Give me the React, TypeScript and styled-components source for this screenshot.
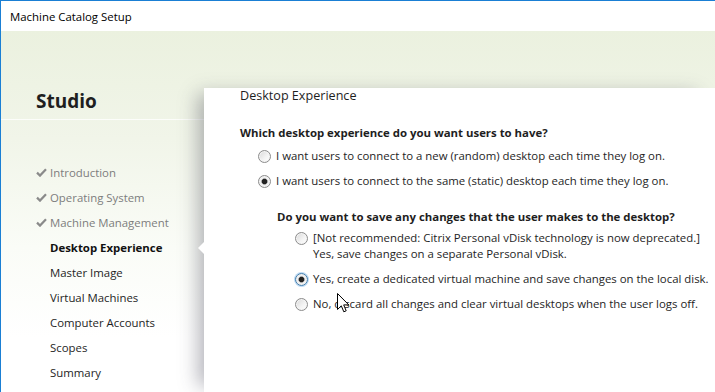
import React from 'react';
import styled, { createGlobalStyle } from 'styled-components';

const GlobalStyle = createGlobalStyle`
  html, body {
    margin: 0;
    padding: 0;
    background: #ffffff;
  }
  body {
    font-family: "Open Sans", "Noto Sans", "Liberation Sans", sans-serif;
    color: #1e1e1e;
  }
`;

const steps = [
  { label: 'Introduction', state: 'done' },
  { label: 'Operating System', state: 'done' },
  { label: 'Machine Management', state: 'done' },
  { label: 'Desktop Experience', state: 'active' },
  { label: 'Master Image', state: 'todo' },
  { label: 'Virtual Machines', state: 'todo' },
  { label: 'Computer Accounts', state: 'todo' },
  { label: 'Scopes', state: 'todo' },
  { label: 'Summary', state: 'todo' },
] as const;

type StepState = 'done' | 'active' | 'todo';

const Check = () => (
  <svg width="11" height="9" viewBox="0 0 11 9">
    <path d="M1 4.6 L4 7.6 L10 1.2" fill="none" stroke="#8a8a8a" strokeWidth="2.2" />
  </svg>
);

const Cursor = () => (
  <svg width="13" height="20" viewBox="0 0 13 20">
    <path
      d="M0.5 0.5 L0.5 16.5 L4.3 12.8 L6.8 18.8 L9.2 17.8 L6.7 11.9 L11.8 11.9 Z"
      fill="#ffffff"
      stroke="#000000"
      strokeWidth="1"
    />
  </svg>
);

const App = () => {
  return (
    <>
      <GlobalStyle />
      <Window>
        <TitleBar>Machine Catalog Setup</TitleBar>
        <Body>
          <Sidebar>
            <Brand>Studio</Brand>
            <BrandRule />
            <StepList>
              {steps.map((s) => (
                <Step key={s.label} $state={s.state}>
                  <CheckSlot>{s.state === 'done' && <Check />}</CheckSlot>
                  {s.label}
                </Step>
              ))}
            </StepList>
          </Sidebar>
          <Main>
            <Panel>
              <PageTitle>Desktop Experience</PageTitle>
              <Question>Which desktop experience do you want users to have?</Question>
              <Options $top={7}>
                <Option>
                  <Radio />
                  <span>I want users to connect to a new (random) desktop each time they log on.</span>
                </Option>
                <Option>
                  <Radio $checked />
                  <span>I want users to connect to the same (static) desktop each time they log on.</span>
                </Option>
              </Options>
              <SubGroup>
                <Question>Do you want to save any changes that the user makes to the desktop?</Question>
                <Options $top={5}>
                  <Option>
                    <Radio />
                    <span>
                      [Not recommended: Citrix Personal vDisk technology is now deprecated.]
                      <br />
                      Yes, save changes on a separate Personal vDisk.
                    </span>
                  </Option>
                  <Option>
                    <Radio $checked $focused />
                    <span>Yes, create a dedicated virtual machine and save changes on the local disk.</span>
                  </Option>
                  <Option>
                    <Radio />
                    <span>No, discard all changes and clear virtual desktops when the user logs off.</span>
                  </Option>
                </Options>
              </SubGroup>
              <Pointer>
                <Cursor />
              </Pointer>
            </Panel>
          </Main>
        </Body>
      </Window>
    </>
  );
};

const Window = styled.div`
  width: 715px;
  height: 392px;
  box-sizing: border-box;
  border-top: 1px solid #1a7fd4;
  border-left: 1px solid #1a7fd4;
  display: flex;
  flex-direction: column;
  overflow: hidden;
`;

const TitleBar = styled.div`
  height: 30px;
  flex: none;
  display: flex;
  align-items: center;
  padding-left: 9px;
  font-size: 11.4px;
  color: #000;
  background: #fff;
`;

const Body = styled.div`
  flex: 1;
  display: flex;
  background: linear-gradient(180deg, #ebf1df 0%, #f1f5e9 30%, #fafcf7 60%, #ffffff 85%);
`;

const Sidebar = styled.div`
  width: 203px;
  flex: none;
  display: flex;
  flex-direction: column;
`;

const Brand = styled.div`
  padding: 57px 0 0 35px;
  height: 31px;
  font-size: 19px;
  font-weight: 700;
  color: #1f1f1f;
  line-height: 26px;
`;

const BrandRule = styled.div`
  height: 1px;
  background: rgba(255, 255, 255, 0.8);
`;

const StepList = styled.ul`
  list-style: none;
  margin: 40px 0 0;
  padding: 0;
  display: flex;
  flex-direction: column;
`;

const Step = styled.li<{ $state: StepState }>`
  position: relative;
  height: 25px;
  display: flex;
  align-items: center;
  padding-left: 35px;
  font-size: 11.4px;
  font-weight: ${(p) => (p.$state === 'active' ? 700 : 400)};
  color: ${(p) => (p.$state === 'done' ? '#7d7d7d' : p.$state === 'active' ? '#111' : '#1e1e1e')};

  &::after {
    content: '';
    display: ${(p) => (p.$state === 'active' ? 'block' : 'none')};
    position: absolute;
    right: 0;
    top: 7px;
    border-top: 6px solid transparent;
    border-bottom: 6px solid transparent;
    border-right: 6px solid #ffffff;
    z-index: 3;
  }
`;

const CheckSlot = styled.span`
  width: 14px;
  display: inline-flex;
  align-items: center;
`;

const Main = styled.div`
  flex: 1;
  display: flex;
  flex-direction: column;
  padding-top: 57px;
  position: relative;
  z-index: 1;
`;

const Panel = styled.div`
  flex: 1;
  position: relative;
  background: #ffffff;
  box-shadow: -12px 0 18px -6px rgba(60, 60, 80, 0.38);
  padding: 0 0 0 36px;
  font-size: 11.4px;
`;

const PageTitle = styled.div`
  height: 16px;
  line-height: 16px;
  font-size: 12.6px;
  color: #1e1e1e;
`;

const Question = styled.div`
  margin-top: 21px;
  font-weight: 700;
  line-height: 16px;
  color: #1e1e1e;
`;

const Options = styled.div<{ $top: number }>`
  display: flex;
  flex-direction: column;
  gap: 9px;
  margin-top: ${(p) => p.$top}px;
  padding-left: 18px;
`;

const Option = styled.label`
  display: flex;
  align-items: flex-start;
  gap: 5px;
  line-height: 16px;
  color: #1e1e1e;
`;

const Radio = styled.span<{ $checked?: boolean; $focused?: boolean }>`
  flex: none;
  width: 11px;
  height: 11px;
  margin-top: 2px;
  border-radius: 50%;
  border: 1px solid ${(p) => (p.$focused ? '#3d7bad' : '#8c8c8c')};
  background: ${(p) =>
    p.$checked
      ? 'radial-gradient(circle, #222 0 2.3px, #9a9a9a 2.9px, #f0f0f0 3.6px, #e6e6e6 100%)'
      : 'linear-gradient(135deg, #d8d8d8 0%, #f4f4f4 60%, #ffffff 100%)'};
  box-shadow: ${(p) => (p.$focused ? '0 0 0 1px #bcdaf4' : 'inset 0 0 0 1px #f4f4f4')};
`;

const SubGroup = styled.div`
  padding-left: 37px;
  margin-top: -1px;
`;

const Pointer = styled.div`
  position: absolute;
  left: 133px;
  top: 205px;
  line-height: 0;
  pointer-events: none;
`;

export default App;
